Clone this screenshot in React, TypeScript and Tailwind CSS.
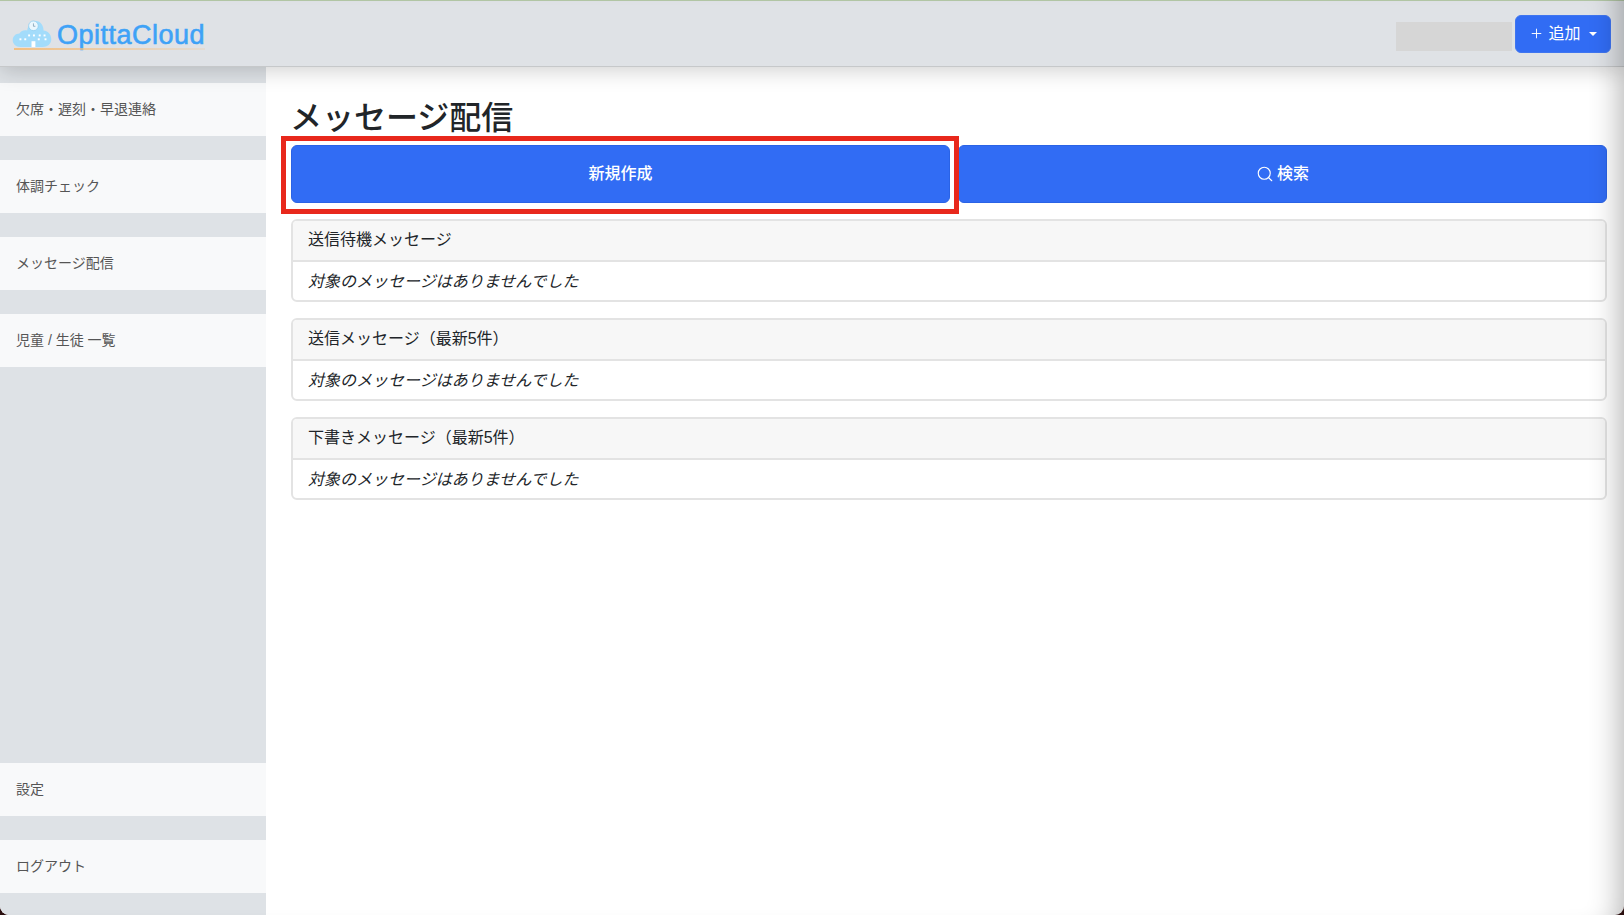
import { Plus, Search } from "lucide-react";

const font = "font-['Liberation_Sans','Noto_Sans_CJK_JP',sans-serif]";

const topItems = ["欠席・遅刻・早退連絡", "体調チェック", "メッセージ配信", "児童 / 生徒 一覧"];
const bottomItems = ["設定", "ログアウト"];
const panels = ["送信待機メッセージ", "送信メッセージ（最新5件）", "下書きメッセージ（最新5件）"];

function Logo() {
  return (
    <div className="relative flex h-[32px] items-center">
      <svg width="40" height="27" viewBox="0 0 40 28" className="mr-[5px]">
        <path
          d="M8 28C3 28 0 24.500 0 21C0 17 3 14 7 14C9 11 12 10 15 11C16 5 20 1 24 1C29 1 32 6 32 11C36 11 40 15 40 20C40 25 36 28 31 28Z"
          fill="#a3dcfb"
        />
        <circle cx="21.500" cy="6" r="5" fill="#eaf7fe" stroke="#8fcdf0" strokeWidth="0.800" />
        <path d="M21.500 3.500V6.500H23.500" stroke="#6a8ea5" strokeWidth="0.700" fill="none" />
        <rect x="19.500" y="22" width="4" height="6" fill="#fff" />
        <g fill="#fff">
          <rect x="7" y="19" width="2" height="2" />
          <rect x="12" y="19" width="2" height="2" />
          <rect x="16" y="15" width="2" height="2" />
          <rect x="21" y="15" width="2" height="2" />
          <rect x="27" y="15" width="2" height="2" />
          <rect x="32" y="15" width="2" height="2" />
          <rect x="26" y="19" width="2" height="2" />
          <rect x="33" y="19" width="2" height="2" />
        </g>
      </svg>
      <span className="pt-[3px] font-['Liberation_Sans',sans-serif] text-[27px] leading-none tracking-[0.500px] text-[#3ea2f7] [-webkit-text-stroke:0.600px_#3ea2f7]">
        OpittaCloud
      </span>
      {/* Logo underline */}
      <div className="absolute bottom-0 left-[2px] right-0 h-[2px] bg-gradient-to-r from-[#f3c083] to-[#f3c083]/20" />
    </div>
  );
}

function NavItem({ label }: { label: string }) {
  return (
    <a className="flex h-[53px] items-center bg-[#f8f9fa] pl-[16px] text-[14px] text-[#555]">
      {label}
    </a>
  );
}

function Panel({ title }: { title: string }) {
  return (
    <div className="overflow-hidden rounded-[6px] border-2 border-[#e3e3e3]">
      <div className="flex h-[41px] items-center border-b-2 border-[#e3e3e3] bg-[#f7f7f7] pb-[2px] pl-[15px] text-[16px] text-[#212529]">
        {title}
      </div>
      <div className="flex h-[38px] items-center pl-[15px] pt-[1px] text-[16px] italic text-[#212529]">
        対象のメッセージはありませんでした
      </div>
    </div>
  );
}

export default function App() {
  return (
    <div className="h-[915px] w-[1624px] overflow-hidden bg-[#2b0f0f]">
      <div className={`${font} relative flex h-[915px] w-[1624px] flex-col overflow-hidden rounded-b-[9px] bg-white`}>
        {/* Header */}
        <header className="z-10 flex h-[67px] shrink-0 items-center justify-between border-t border-b border-t-[#b3c7a6] border-b-[#c6c8ca] bg-[#dfe2e6] pl-[12px] pr-[13px] shadow-[0_4px_20px_rgba(0,0,0,0.18)]">
          <Logo />
          <div className="flex items-center gap-[3px]">
            <div className="mt-[5px] h-[29px] w-[116px] bg-[#d6d6d6]" />
            <button className="flex h-[38px] w-[96px] items-center justify-center rounded-[6px] border border-[#3f75f0] bg-[#316cf4] text-[16px] text-white">
              <Plus size={15} strokeWidth={1.500} className="mr-[4px]" />
              追加
              <span className="ml-[8px] h-0 w-0 border-x-[4.500px] border-t-[4.500px] border-x-transparent border-t-white" />
            </button>
          </div>
        </header>

        <div className="flex min-h-0 flex-1">
          {/* Sidebar */}
          <aside className="flex w-[266px] shrink-0 flex-col justify-between bg-[#dee2e6] pb-[22px] pt-[16px]">
            <nav className="flex flex-col gap-[24px]">
              {topItems.map((item) => (
                <NavItem key={item} label={item} />
              ))}
            </nav>
            <nav className="flex flex-col gap-[24px]">
              {bottomItems.map((item) => (
                <NavItem key={item} label={item} />
              ))}
            </nav>
          </aside>

          {/* Main */}
          <main className="flex-1 pl-[25px] pr-[17px] pt-[32px]">
            <h1 className="ml-[-1px] h-[46px] text-[32px] font-medium leading-[38px] text-[#212529]">メッセージ配信</h1>
            <div className="flex gap-[8px]">
              <button className="h-[58px] w-[659px] shrink-0 rounded-[6px] border border-[#2a63e6] bg-[#316cf4] text-[16px] font-medium text-white">
                新規作成
              </button>
              <button className="flex h-[58px] flex-1 items-center justify-center rounded-[6px] border border-[#2a63e6] bg-[#316cf4] text-[16px] font-medium text-white">
                <Search size={18} strokeWidth={1.500} className="mr-[3px]" />
                検索
              </button>
            </div>
            <div className="mt-[16px] flex flex-col gap-[16px]">
              {panels.map((panel) => (
                <Panel key={panel} title={panel} />
              ))}
            </div>
          </main>
        </div>

        {/* Annotation box */}
        <div className="absolute left-[281px] top-[136px] h-[78px] w-[678px] border-[5px] border-[#e8281c]" />
        {/* Window edge shade */}
        <div className="pointer-events-none absolute inset-0 z-20 rounded-b-[9px] shadow-[inset_-30px_0_30px_-26px_rgba(0,0,0,0.3)]" />
      </div>
    </div>
  );
}
